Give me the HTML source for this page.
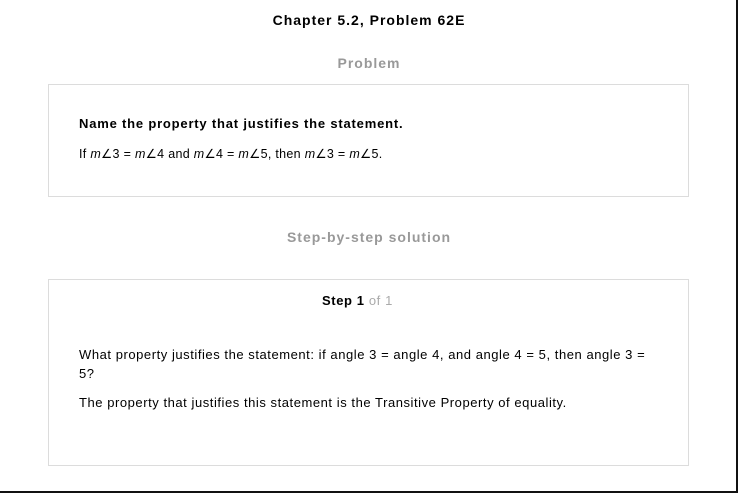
<!DOCTYPE html>
<html><head><style>
body{margin:0;width:738px;height:493px;position:relative;background:#fff;font-family:"Liberation Sans",Arial,sans-serif;overflow:hidden}
.a{position:absolute;white-space:nowrap}
.box{position:absolute;border:1px solid #dcdcdc;box-sizing:border-box}
</style></head><body>
<div style="position:absolute;right:0;top:0;width:2px;height:493px;background:#111"></div>
<div style="position:absolute;left:0;bottom:0;width:738px;height:2px;background:#111"></div>
<div class="a" style="left:0;width:738px;text-align:center;top:12px;font-size:14px;font-weight:bold;color:#000;letter-spacing:1px">Chapter 5.2, Problem 62E</div>
<div class="a" style="left:0;width:738px;text-align:center;top:55px;font-size:14px;font-weight:bold;color:#999;letter-spacing:1px">Problem</div>
<div class="box" style="left:48px;top:84px;width:641px;height:113px"></div>
<div class="a" style="left:79px;top:116px;font-size:13px;font-weight:bold;color:#000;letter-spacing:0.8px">Name the property that justifies the statement.</div>
<div class="a" style="left:79px;top:146px;font-size:12.5px;color:#000;letter-spacing:0.3px">If <i>m</i>∠3 = <i>m</i>∠4 and <i>m</i>∠4 = <i>m</i>∠5, then <i>m</i>∠3 = <i>m</i>∠5.</div>
<div class="a" style="left:0;width:738px;text-align:center;top:229px;font-size:14px;font-weight:bold;color:#999;letter-spacing:1px">Step-by-step solution</div>
<div class="box" style="left:48px;top:279px;width:641px;height:187px"></div>
<div class="a" style="left:322px;top:293px;font-size:13px;color:#000;letter-spacing:0.6px"><b>Step 1</b> <span style="color:#aaa">of 1</span></div>
<div class="a" style="left:79px;top:345px;font-size:13px;color:#000;line-height:19px;letter-spacing:0.55px">What property justifies the statement: if angle 3 = angle 4, and angle 4 = 5, then angle 3 =<br>5?</div>
<div class="a" style="left:79px;top:395px;font-size:13px;color:#000;letter-spacing:0.55px">The property that justifies this statement is the Transitive Property of equality.</div>
</body></html>
